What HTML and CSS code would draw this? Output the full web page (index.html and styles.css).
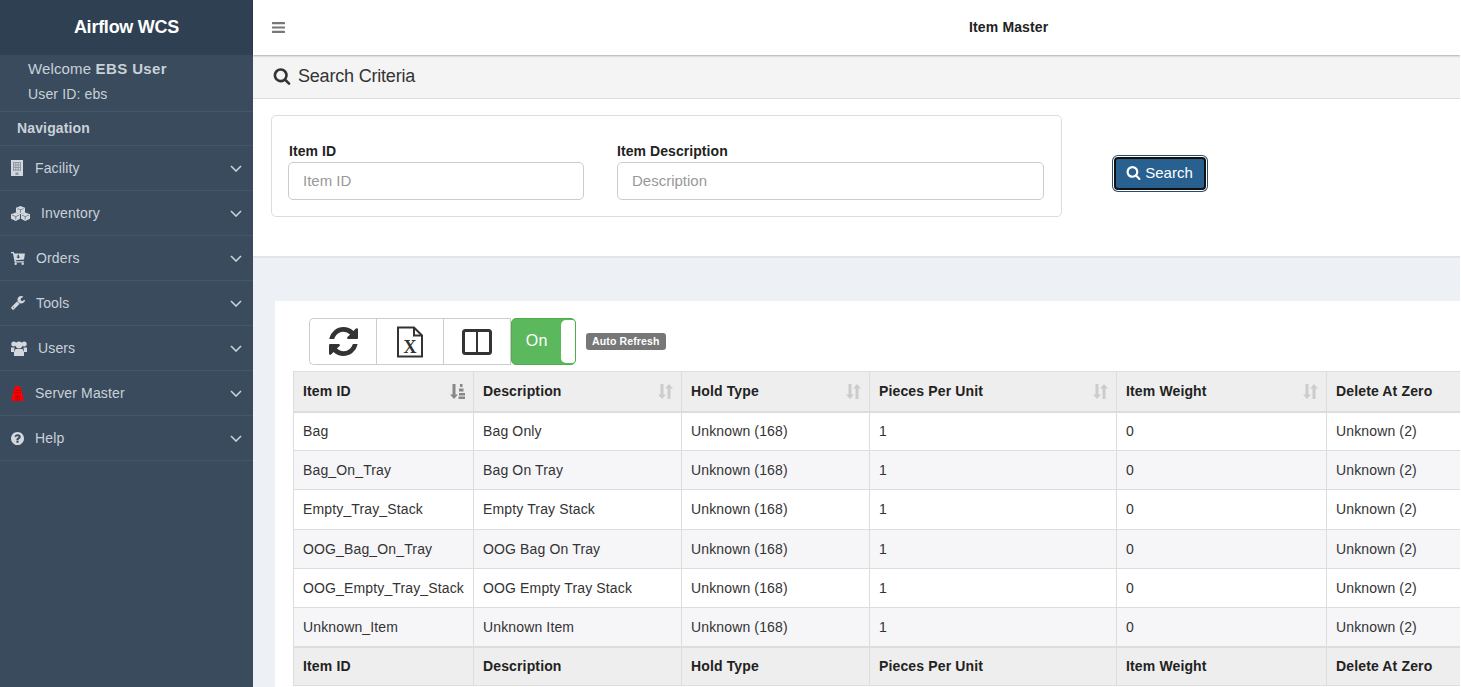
FILE: index.html
```html
<!DOCTYPE html>
<html lang="en">
<head>
  <meta charset="UTF-8" />
  <meta name="viewport" content="width=device-width, initial-scale=1.0"/>
  <title>Item Master</title>
  <link rel="stylesheet" href="styles.css">
</head>
<body>
  <svg class="icon-defs" aria-hidden="true">
    <symbol id="i-search" viewBox="0 0 1792 1792"><path fill="currentColor" d="M1216 832q0-185-131.5-316.5t-316.5-131.5-316.5 131.5-131.5 316.5 131.5 316.5 316.5 131.5 316.5-131.5 131.5-316.5zm512 832q0 52-38 90t-90 38q-54 0-90-38l-343-342q-179 124-399 124-143 0-273.5-55.5t-225-150-150-225-55.5-273.5 55.5-273.5 150-225 225-150 273.5-55.5 273.5 55.5 225 150 150 225 55.5 273.5q0 220-124 399l343 343q37 37 37 90z"/></symbol>
    <symbol id="i-bars" viewBox="128 256 1536 1280" preserveAspectRatio="none"><path fill="currentColor" d="M1664 1344v128q0 26-19 45t-45 19h-1408q-26 0-45-19t-19-45v-128q0-26 19-45t45-19h1408q26 0 45 19t19 45zm0-512v128q0 26-19 45t-45 19h-1408q-26 0-45-19t-19-45v-128q0-26 19-45t45-19h1408q26 0 45 19t19 45zm0-512v128q0 26-19 45t-45 19h-1408q-26 0-45-19t-19-45v-128q0-26 19-45t45-19h1408q26 0 45 19t19 45z"/></symbol>
    <symbol id="i-refresh" viewBox="128 128 1536 1536"><path fill="currentColor" d="M1639 1056q0 5-1 7-64 268-268 434.5t-478 166.5q-146 0-282.5-55t-243.5-157l-129 129q-19 19-45 19t-45-19-19-45v-448q0-26 19-45t45-19h448q26 0 45 19t19 45-19 45l-137 137q71 66 161 102t187 36q134 0 250-65t186-179q11-17 53-117 8-23 30-23h192q13 0 22.5 9.5t9.5 22.5zm25-800v448q0 26-19 45t-45 19h-448q-26 0-45-19t-19-45 19-45l138-138q-148-137-349-137-134 0-250 65t-186 179q-11 17-53 117-8 23-30 23h-199q-13 0-22.5-9.5t-9.5-22.5v-7q65-268 270-434.5t480-166.5q146 0 284 55.5t245 156.5l130-129q19-19 45-19t45 19 19 45z"/></symbol>
    <symbol id="i-wrench" viewBox="64 128 1664 1664"><path fill="currentColor" d="M448 1472q0-26-19-45t-45-19-45 19-19 45 19 45 45 19 45-19 19-45zm644-420l-682 682q-37 37-90 37-52 0-91-37l-106-108q-38-36-38-90 0-53 38-91l681-681q39 98 114.5 173.5t173.5 114.5zm634-435q0 39-23 106-47 134-164.5 217.5t-258.5 83.5q-185 0-316.5-131.5t-131.5-316.5 131.5-316.5 316.5-131.5q58 0 121.5 16.5t107.5 46.5q16 11 16 28t-16 28l-293 169v224l193 107q5-3 79-48.5t135.5-81 70.5-35.5q15 0 23.5 10t8.5 25z"/></symbol>
    <symbol id="i-help" viewBox="128 128 1536 1536"><path fill="currentColor" d="M1024 1376v-192q0-14-9-23t-23-9h-192q-14 0-23 9t-9 23v192q0 14 9 23t23 9h192q14 0 23-9t9-23zm256-672q0-88-55.5-163t-138.5-116-170-41q-243 0-371 213-15 24 8 42l132 100q7 6 19 6 16 0 25-12 53-68 86-92 34-24 86-24 48 0 85.5 26t37.5 59q0 38-20 61t-68 45q-63 28-115.5 86.5t-52.5 125.5v36q0 14 9 23t23 9h192q14 0 23-9t9-23q0-19 21.5-49.5t54.5-49.5q32-18 49-28.5t46-35 44.5-48 28-60.5 12.5-81zm384 192q0 209-103 385.5t-279.5 279.5-385.5 103-385.5-103-279.5-279.5-103-385.5 103-385.5 279.5-279.5 385.5-103 385.5 103 279.5 279.5 103 385.5z"/></symbol>
    <symbol id="i-building" viewBox="0 0 12 16"><path fill="currentColor" d="M0 0h12v16H0z"/><path fill="#8d99a6" d="M2 2h8v1H2zM2 4.500h8v1H2zM2 7h8v1H2zM2 9.500h8v1H2zM2 2h1v9H2zM4.300 2h1v9h-1zM6.700 2h1v9h-1zM9 2h1v9H9zM4.500 12.500h3V15h-3z"/></symbol>
    <symbol id="i-cubes" viewBox="0 0 19 15"><path fill="currentColor" d="M9.500 0l4.500 1.800v4.700l-4.500 1.800L5 6.500V1.800zM4.800 6.500L9 8.200v4.600L4.800 15 0 12.800V8.200zM14.200 6.500L19 8.200v4.600L14.200 15 10 12.800V8.200z"/><path fill="#5d6d7e" d="M6.500 2.300l3 1.200 3-1.200v.7l-2.600 1v2.700h-.8V4l-2.600-1zM1.200 8.800l3.600 1.400L8 8.800v.7l-2.800 1.200v2.800h-.8v-2.800L1.200 9.500zM11 8.800l3.200 1.400 3.600-1.400v.7l-3.200 1.200v2.800h-.8v-2.800L11 9.500z"/></symbol>
    <symbol id="i-cart" viewBox="0 0 15 14"><path fill="currentColor" fill-rule="evenodd" d="M0 0h3l.5 1.500H15l-1 6.500-9 1 .3 1H14v1.300H4L2 1.300H0zM7 3h1.500v2H10L7.800 7 5.600 5H7z"/><circle fill="currentColor" cx="5" cy="12.700" r="1.300"/><circle fill="currentColor" cx="12.500" cy="12.700" r="1.300"/></symbol>
    <symbol id="i-users" viewBox="0 0 16 15"><circle fill="currentColor" cx="2.800" cy="3" r="2.500"/><circle fill="currentColor" cx="13.200" cy="3" r="2.500"/><circle fill="currentColor" cx="8" cy="4" r="3.400"/><path fill="currentColor" d="M0 6.500h3.500L3 11H0zM12.500 6.500H16V11h-3zM4.500 8h7l1.500 3v4H3v-4z"/></symbol>
    <symbol id="i-server" viewBox="0 0 13 16"><path fill="currentColor" d="M4.500 0h4L10 2v2.500h1V7l2 7v2H0v-2l2-7V4.500h1V2z"/><path fill="#b00000" d="M3.500 4.300h6v.8h-6zM2.800 7h7.400v.7H2.800zM4.500 9.500h.8V16h-.8zM6.200 9.500H7V16h-.8zM7.900 9.500h.8V16h-.8z"/></symbol>
    <symbol id="i-sort" viewBox="0 0 15 15"><path fill="currentColor" d="M2.500 0h3v10.500H8L4 15l-4-4.500h2.500zM12.500 15h-3V4.500H7L11 0l4 4.500h-2.500z"/></symbol>
    <symbol id="i-sort-asc" viewBox="0 0 15 15"><path fill="currentColor" d="M2.500 0h3v10.500H8L4 15l-4-4.500h2.500zM10 0h2.500v3H10zM9 4.500h4.500V7.500H9zM9 9h6v2.500H9zM8.500 12.500H15V15H8.500z"/></symbol>
  </svg>

  <div class="page">
    <aside class="sidebar">
      <div class="brand">Airflow WCS</div>
      <div class="user-box">
        <div class="welcome">Welcome <strong>EBS User</strong></div>
        <div class="user-id">User ID: ebs</div>
      </div>
      <div class="nav-title">Navigation</div>
      <ul class="nav">
        <li><svg class="nav-icon wide-gap" width="12" height="16"><use href="#i-building"/></svg>Facility<svg class="chevron" viewBox="0 0 12 7"><path d="M1 1l5 5 5-5"/></svg></li>
        <li><svg class="nav-icon" width="19" height="15"><use href="#i-cubes"/></svg>Inventory<svg class="chevron" viewBox="0 0 12 7"><path d="M1 1l5 5 5-5"/></svg></li>
        <li><svg class="nav-icon" width="14" height="13"><use href="#i-cart"/></svg>Orders<svg class="chevron" viewBox="0 0 12 7"><path d="M1 1l5 5 5-5"/></svg></li>
        <li><svg class="nav-icon" width="14" height="14"><use href="#i-wrench"/></svg>Tools<svg class="chevron" viewBox="0 0 12 7"><path d="M1 1l5 5 5-5"/></svg></li>
        <li><svg class="nav-icon" width="16" height="15"><use href="#i-users"/></svg>Users<svg class="chevron" viewBox="0 0 12 7"><path d="M1 1l5 5 5-5"/></svg></li>
        <li><svg class="nav-icon red" width="13" height="15"><use href="#i-server"/></svg>Server Master<svg class="chevron" viewBox="0 0 12 7"><path d="M1 1l5 5 5-5"/></svg></li>
        <li><svg class="nav-icon" width="13" height="13"><use href="#i-help"/></svg>Help<svg class="chevron" viewBox="0 0 12 7"><path d="M1 1l5 5 5-5"/></svg></li>
      </ul>
    </aside>

    <main class="main">
      <header class="topbar">
        <svg class="bars" width="13" height="11"><use href="#i-bars"/></svg>
        <span class="page-title">Item Master</span>
      </header>

      <section class="search-panel">
        <h2 class="search-heading"><svg width="18" height="18"><use href="#i-search"/></svg>Search Criteria</h2>
        <div class="search-body">
          <form class="search-form">
            <div class="field field-id">
              <label>Item ID</label>
              <input type="text" placeholder="Item ID">
            </div>
            <div class="field field-desc">
              <label>Item Description</label>
              <input type="text" placeholder="Description">
            </div>
          </form>
          <button type="button" class="search-btn"><svg width="15" height="15"><use href="#i-search"/></svg>Search</button>
        </div>
      </section>

      <section class="table-card">
        <div class="toolbar">
          <div class="btn-group">
            <button type="button"><svg width="29" height="29"><use href="#i-refresh"/></svg></button>
            <button type="button">
              <svg width="28" height="32" viewBox="0 0 28 32">
                <path d="M2 1.500h16l8 8v21H2z" fill="#fff" stroke="#333" stroke-width="2"/>
                <path d="M18 1.500v8h8" fill="none" stroke="#333" stroke-width="2"/>
                <text x="14" y="27" text-anchor="middle" class="file-x">X</text>
              </svg>
            </button>
            <button type="button">
              <svg width="30" height="26" viewBox="0 0 30 26">
                <rect x="1.500" y="1.500" width="27" height="23" rx="2" fill="#fff" stroke="#333" stroke-width="3"/>
                <path d="M15 2v22" stroke="#333" stroke-width="2"/>
              </svg>
            </button>
          </div>
          <div class="switch"><span>On</span><i></i></div>
          <span class="badge">Auto Refresh</span>
        </div>

        <div class="table-wrap">
          <table class="grid">
            <colgroup>
              <col class="c1"><col class="c2"><col class="c3"><col class="c4"><col class="c5"><col class="c6">
            </colgroup>
            <thead>
              <tr>
                <th>Item ID<svg class="sort active" width="15" height="15"><use href="#i-sort-asc"/></svg></th>
                <th>Description<svg class="sort" width="15" height="15"><use href="#i-sort"/></svg></th>
                <th>Hold Type<svg class="sort" width="15" height="15"><use href="#i-sort"/></svg></th>
                <th>Pieces Per Unit<svg class="sort" width="15" height="15"><use href="#i-sort"/></svg></th>
                <th>Item Weight<svg class="sort" width="15" height="15"><use href="#i-sort"/></svg></th>
                <th>Delete At Zero</th>
              </tr>
            </thead>
            <tbody>
              <tr><td>Bag</td><td>Bag Only</td><td>Unknown (168)</td><td>1</td><td>0</td><td>Unknown (2)</td></tr>
              <tr><td>Bag_On_Tray</td><td>Bag On Tray</td><td>Unknown (168)</td><td>1</td><td>0</td><td>Unknown (2)</td></tr>
              <tr><td>Empty_Tray_Stack</td><td>Empty Tray Stack</td><td>Unknown (168)</td><td>1</td><td>0</td><td>Unknown (2)</td></tr>
              <tr><td>OOG_Bag_On_Tray</td><td>OOG Bag On Tray</td><td>Unknown (168)</td><td>1</td><td>0</td><td>Unknown (2)</td></tr>
              <tr><td>OOG_Empty_Tray_Stack</td><td>OOG Empty Tray Stack</td><td>Unknown (168)</td><td>1</td><td>0</td><td>Unknown (2)</td></tr>
              <tr><td>Unknown_Item</td><td>Unknown Item</td><td>Unknown (168)</td><td>1</td><td>0</td><td>Unknown (2)</td></tr>
            </tbody>
            <tfoot>
              <tr><th>Item ID</th><th>Description</th><th>Hold Type</th><th>Pieces Per Unit</th><th>Item Weight</th><th>Delete At Zero</th></tr>
            </tfoot>
          </table>
        </div>
      </section>
    </main>
  </div>
</body>
</html>
```

FILE: styles.css
```css
html {
  background-color: #fff;
}
body {
  margin: 0;
  width: 1460px;
  height: 687px;
  overflow: hidden;
  font-family: "Liberation Sans", Arial, sans-serif;
  font-size: 14px;
  letter-spacing: 0.14px;
  color: #333;
  background-color: #edf1f5;
}
.icon-defs {
  display: none;
}
.page {
  display: flex;
  height: 687px;
}

/* sidebar */
.sidebar {
  width: 253px;
  flex-shrink: 0;
  background-color: #3a4b5e;
  color: #c9d1d8;
}
.brand {
  height: 55px;
  line-height: 55px;
  text-align: center;
  font-size: 18px;
  font-weight: bold;
  letter-spacing: -0.25px;
  color: #fff;
  background-color: #2f4052;
}
.user-box {
  height: 57px;
  padding-left: 28px;
  box-sizing: border-box;
  border-bottom: 1px solid #44566a;
}
.welcome {
  font-size: 15px;
  padding-top: 5px;
  line-height: 18px;
}
.welcome strong {
  letter-spacing: 0.4px;
}
.user-id {
  margin-top: 7px;
  line-height: 18px;
}
.nav-title {
  height: 34px;
  line-height: 33px;
  padding-left: 17px;
  box-sizing: border-box;
  font-weight: bold;
  border-bottom: 1px solid #44566a;
}
.nav {
  list-style: none;
  margin: 0;
  padding: 0;
}
.nav li {
  display: flex;
  align-items: center;
  height: 45px;
  box-sizing: border-box;
  padding: 0 11px;
  border-bottom: 1px solid #44566a;
}
.nav-icon {
  margin-right: 11px;
  color: #d2d8dd;
}
.nav-icon.wide-gap {
  margin-right: 12px;
}
.nav-icon.red {
  color: #f00;
}
.chevron {
  width: 12px;
  height: 7px;
  margin-left: auto;
  fill: none;
  stroke: #c9d1d8;
  stroke-width: 1.600;
}

/* top bar */
.main {
  flex: 1;
  min-width: 0;
}
.topbar {
  display: flex;
  align-items: center;
  height: 55px;
  padding: 0 0 1px 19px;
  box-sizing: border-box;
  background-color: #fff;
  box-shadow: 0 1px 2px rgba(0, 0, 0, 0.3);
  position: relative;
}
.bars {
  color: #777;
}
.page-title {
  margin-left: 684px;
  font-weight: bold;
  color: #222;
}

/* search */
.search-panel {
  height: 203px;
  background-color: #fff;
  border-bottom: 2px solid #e2e4e7;
  box-sizing: border-box;
}
.search-heading {
  display: flex;
  align-items: center;
  gap: 7px;
  height: 44px;
  margin: 0;
  padding-left: 20px;
  box-sizing: border-box;
  font-size: 18px;
  font-weight: normal;
  letter-spacing: -0.2px;
  background-color: #f4f4f4;
  border-bottom: 1px solid #ddd;
}
.search-heading svg {
  margin-bottom: 2px;
}
.search-body {
  display: flex;
  align-items: flex-start;
  padding: 16px 0 0 18px;
}
.search-form {
  display: flex;
  gap: 33px;
  width: 791px;
  height: 102px;
  box-sizing: border-box;
  padding: 27px 16px 0;
  border: 1px solid #ddd;
  border-radius: 5px;
}
.field label {
  display: block;
  font-weight: bold;
  letter-spacing: 0.07px;
  color: #222;
  line-height: 17px;
  margin-bottom: 2px;
}
.field-id label {
  padding-left: 1px;
}
.field input {
  display: block;
  height: 38px;
  box-sizing: border-box;
  padding: 0 14px 2px;
  font-family: inherit;
  font-size: 15px;
  border: 1px solid #ccc;
  border-radius: 5px;
}
.field input::placeholder {
  color: #999;
}
.field-id input {
  width: 296px;
}
.field-desc input {
  width: 427px;
}
.search-btn {
  display: flex;
  align-items: center;
  justify-content: center;
  gap: 4px;
  width: 92px;
  height: 33px;
  margin: 42px 0 0 52px;
  padding: 0 1px 2px 0;
  font-family: inherit;
  font-size: 15px;
  color: #fff;
  background-color: #286090;
  border: 2px solid #111;
  border-radius: 4px;
  box-shadow: 0 0 0 1px #fff, 0 0 0 2px #2a4a68;
}

/* table card */
.table-card {
  margin: 43px 0 0 22px;
  padding: 17px 0 0 18px;
  height: 386px;
  background-color: #fff;
  overflow: hidden;
}
.toolbar {
  display: flex;
  align-items: center;
  margin-left: 16px;
}
.btn-group {
  display: flex;
  height: 47px;
  box-sizing: border-box;
  border: 1px solid #ccc;
  border-right: 0;
  border-radius: 5px 0 0 5px;
}
.btn-group button {
  display: flex;
  align-items: center;
  justify-content: center;
  width: 67px;
  padding: 0;
  color: #333;
  background: #fff;
  border: 0;
  border-right: 1px solid #ccc;
}
.btn-group button:first-child {
  border-radius: 5px 0 0 5px;
}
.file-x {
  font-family: "Liberation Serif", serif;
  font-size: 18px;
  font-weight: bold;
  fill: #333;
}
.switch {
  display: flex;
  align-items: center;
  width: 65px;
  height: 47px;
  box-sizing: border-box;
  color: #fff;
  font-size: 16px;
  background-color: #5cb85c;
  border: 1px solid #4cae4c;
  border-radius: 5px;
}
.switch span {
  width: 50px;
  padding-bottom: 2px;
  text-align: center;
}
.switch i {
  width: 14px;
  height: 43px;
  background-color: #fff;
  border-radius: 5px 3px 3px 5px;
}
.badge {
  margin-left: 10px;
  padding: 0 6px;
  line-height: 17px;
  font-size: 10.500px;
  font-weight: bold;
  color: #fff;
  background-color: #777;
  border-radius: 3px;
}
.table-wrap {
  margin-top: 6px;
  overflow: hidden;
}
.grid {
  table-layout: fixed;
  width: 1267px;
  border-collapse: collapse;
}
.c1 { width: 180px; }
.c2 { width: 208px; }
.c3 { width: 188px; }
.c4 { width: 247px; }
.c5 { width: 210px; }
.c6 { width: 234px; }
.grid th,
.grid td {
  height: 39.200px;
  box-sizing: border-box;
  padding: 0 9px;
  border: 1px solid #ddd;
  text-align: left;
  white-space: nowrap;
}
.grid th {
  font-weight: bold;
  color: #222;
  background-color: #eee;
}
.grid thead th {
  position: relative;
  height: 40px;
  border-bottom-width: 2px;
}
.grid tfoot th {
  border-top-width: 2px;
}
.grid tbody tr:nth-child(even) td {
  background-color: #f6f6f9;
}
.sort {
  position: absolute;
  right: 8px;
  top: 12px;
  color: #ccc;
}
.sort.active {
  color: #888;
}
```
